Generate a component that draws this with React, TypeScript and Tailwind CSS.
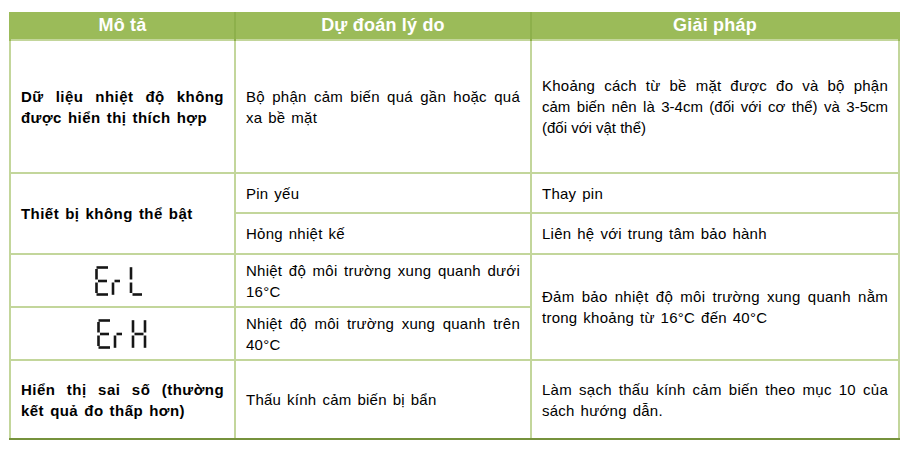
const font = { fontFamily: '"Liberation Sans", Arial, sans-serif' }

function SegE() {
  return (
    <>
      <path d="M1.5 1.5H13" />
      <path d="M1.5 3V13.5" />
      <path d="M3 15H12" />
      <path d="M1.5 16.5V27" />
      <path d="M1.5 28.5H13" />
    </>
  )
}

function SegR() {
  return (
    <>
      <path d="M18 16.5V28.8" />
      <path d="M19.5 15H25" />
    </>
  )
}

function ErrorCode({ kind }: { kind: 'L' | 'H' }) {
  return (
    <svg
      width="50"
      height="30"
      viewBox="0 0 50 30"
      fill="none"
      stroke="#161616"
      strokeWidth="2.6"
      className="inline-block"
    >
      <SegE />
      <SegR />
      {kind === 'L' ? (
        <>
          <path d="M36 1.2V13.5" />
          <path d="M36 16.5V27" />
          <path d="M37.5 28.5H47" />
        </>
      ) : (
        <>
          <path d="M36 1.2V13.5" />
          <path d="M36 16.5V28.8" />
          <path d="M48 1.2V13.5" />
          <path d="M48 16.5V28.8" />
          <path d="M37.5 15H46.5" />
        </>
      )}
    </svg>
  )
}

const cell =
  'border-2 border-[#c3d69b] px-[10px] align-middle text-[15px] leading-[21px] tracking-[0.25px] [word-spacing:1.5px] text-black'
const bold = 'font-bold tracking-[0.45px]'
const head = 'border-x-2 border-[#8db04b] text-center text-[18px] font-bold tracking-[0.2px] text-white'

export default function App() {
  return (
    <div className="h-[452px] w-[907px] bg-white pt-[12px] pl-[9px]" style={font}>
      <table className="w-[889px] table-fixed border-collapse">
        <colgroup>
          <col className="w-[225px]" />
          <col className="w-[296px]" />
          <col className="w-[368px]" />
        </colgroup>
        <thead>
          <tr className="h-[27px] border-b-2 border-[#83a744] bg-[#9bbb59]">
            <th className={`${head} border-l-[#9bbb59]`}>Mô tả</th>
            <th className={head}>Dự đoán lý do</th>
            <th className={`${head} border-r-[#9bbb59]`}>Giải pháp</th>
          </tr>
        </thead>
        <tbody>
          <tr className="h-[133px]">
            <td className={`${cell} ${bold} text-justify`}>
              Dữ liệu nhiệt độ không được hiển thị thích hợp
            </td>
            <td className={`${cell} text-justify`}>Bộ phận cảm biến quá gần hoặc quá xa bề mặt</td>
            <td className={`${cell} text-justify`}>
              <span className="block [text-align-last:justify]">
                Khoảng cách từ bề mặt được đo và bộ phận
              </span>
              <span className="block tracking-[0px] [word-spacing:0px]">
                cảm biến nên là <span className="whitespace-nowrap">3-4cm</span> (đối với cơ thể) và{' '}
                <span className="whitespace-nowrap">3-5cm</span> (đối với vật thể)
              </span>
            </td>
          </tr>
          <tr className="h-[40px]">
            <td rowSpan={2} className={`${cell} ${bold}`}>
              Thiết bị không thể bật
            </td>
            <td className={cell}>Pin yếu</td>
            <td className={cell}>Thay pin</td>
          </tr>
          <tr className="h-[41px]">
            <td className={cell}>Hỏng nhiệt kế</td>
            <td className={cell}>Liên hệ với trung tâm bảo hành</td>
          </tr>
          <tr className="h-[53px]">
            <td className={`${cell} pr-[16px] text-center`}>
              <ErrorCode kind="L" />
            </td>
            <td className={`${cell} text-justify`}>Nhiệt độ môi trường xung quanh dưới 16°C</td>
            <td rowSpan={2} className={`${cell} text-justify`}>
              Đảm bảo nhiệt độ môi trường xung quanh nằm trong khoảng từ 16°C đến 40°C
            </td>
          </tr>
          <tr className="h-[53px]">
            <td className={`${cell} pr-[12px] text-center`}>
              <ErrorCode kind="H" />
            </td>
            <td className={`${cell} text-justify`}>Nhiệt độ môi trường xung quanh trên 40°C</td>
          </tr>
          <tr className="h-[79px] border-b border-b-[#76923c]">
            <td className={`${cell} ${bold} border-b-[#76923c] text-justify`}>
              Hiển thị sai số (thường kết quả đo thấp hơn)
            </td>
            <td className={`${cell} border-b-[#76923c]`}>Thấu kính cảm biến bị bẩn</td>
            <td className={`${cell} border-b-[#76923c] text-justify`}>
              Làm sạch thấu kính cảm biến theo mục 10 của sách hướng dẫn.
            </td>
          </tr>
        </tbody>
      </table>
    </div>
  )
}
